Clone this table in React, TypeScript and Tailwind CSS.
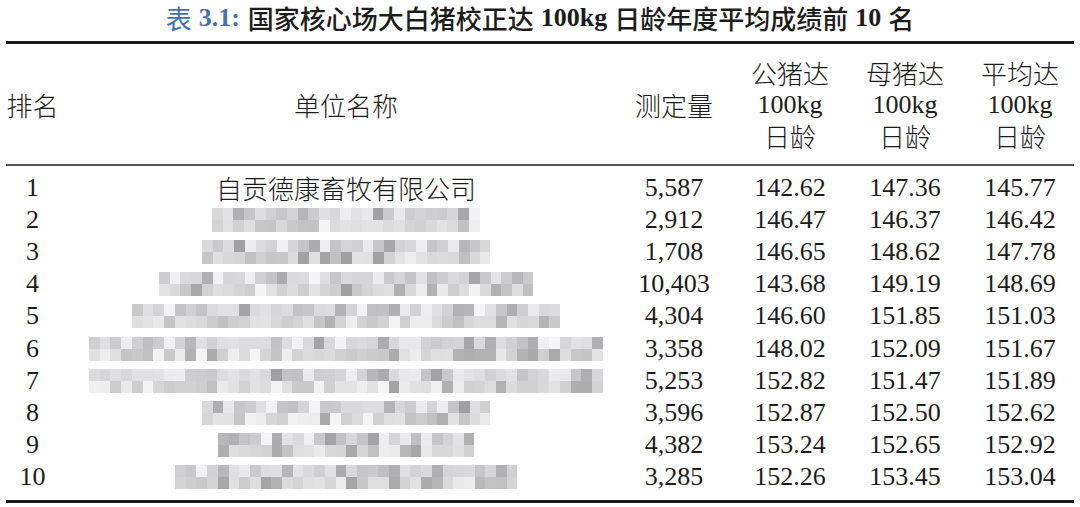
import * as React from 'react'

// Seeded RNG so the pixelated (redacted) names look the same every run.
function mulberry32(seed: number) {
  let a = seed
  return () => {
    a |= 0
    a = (a + 0x6d2b79f5) | 0
    let t = Math.imul(a ^ (a >>> 15), 1 | a)
    t = (t + Math.imul(t ^ (t >>> 7), 61 | t)) ^ t
    return ((t ^ (t >>> 14)) >>> 0) / 4294967296
  }
}

type Row = {
  rank: number
  name?: string
  blur?: number // width of the mosaic in px
  count: string
  boar: string
  sow: string
  avg: string
}

const ROWS: Row[] = [
  { rank: 1, name: '自贡德康畜牧有限公司', count: '5,587', boar: '142.62', sow: '147.36', avg: '145.77' },
  { rank: 2, blur: 270, count: '2,912', boar: '146.47', sow: '146.37', avg: '146.42' },
  { rank: 3, blur: 290, count: '1,708', boar: '146.65', sow: '148.62', avg: '147.78' },
  { rank: 4, blur: 372, count: '10,403', boar: '143.68', sow: '149.19', avg: '148.69' },
  { rank: 5, blur: 428, count: '4,304', boar: '146.60', sow: '151.85', avg: '151.03' },
  { rank: 6, blur: 510, count: '3,358', boar: '148.02', sow: '152.09', avg: '151.67' },
  { rank: 7, blur: 510, count: '5,253', boar: '152.82', sow: '151.47', avg: '151.89' },
  { rank: 8, blur: 290, count: '3,596', boar: '152.87', sow: '152.50', avg: '152.62' },
  { rank: 9, blur: 262, count: '4,382', boar: '153.24', sow: '152.65', avg: '152.92' },
  { rank: 10, blur: 344, count: '3,285', boar: '152.26', sow: '153.45', avg: '153.04' },
]

const COLS = 'grid grid-cols-[65px_562px_94px_138px_92px_138px]'
const SERIF = "[font-family:'Liberation_Serif','Noto_Sans_CJK_SC',serif]"
const CJK = "[font-family:'Noto_Sans_CJK_SC',sans-serif]"

function Mosaic({ width, seed }: { width: number; seed: number }) {
  const rand = mulberry32(seed)
  const cell = 10.7
  const n = Math.round(width / cell)
  const rects: React.ReactNode[] = []
  const heights = [12, 12]
  let y = 0
  heights.forEach((h, r) => {
    for (let i = 0; i < n; i++) {
      const v = rand()
      let g: number
      if (v < 0.15) g = 160 + Math.floor(rand() * 25)
      else if (v < 0.45) g = 192 + Math.floor(rand() * 20)
      else if (v < 0.82) g = 212 + Math.floor(rand() * 16)
      else g = 232 + Math.floor(rand() * 14)
      rects.push(
        <rect
          key={`${r}-${i}`}
          x={i * cell}
          y={y}
          width={cell + 0.3}
          height={h}
          fill={`rgb(${g},${g},${g + 3})`}
        />,
      )
    }
    y += h
  })
  return (
    <svg width={n * cell} height={24} className="block" shapeRendering="crispEdges">
      {rects}
    </svg>
  )
}

export default function App() {
  return (
    <div className={`w-[1080px] h-[507px] overflow-hidden bg-white text-[#1c1c1c] ${SERIF}`}>
      {/* caption */}
      <div className="flex h-[41px] items-start justify-center pt-[2px] text-[26px] leading-[32px]">
        <span className={`${CJK} text-[#4670b0]`}>表</span>
        <span className="ml-[7px] font-bold text-[#4670b0]">3.1:</span>
        <span className={`ml-[8px] ${CJK} font-medium`}>国家核心场大白猪校正达</span>
        <span className="mx-[7px] font-bold">100kg</span>
        <span className={`${CJK} font-medium`}>日龄年度平均成绩前</span>
        <span className="mx-[7px] font-bold">10</span>
        <span className={`${CJK} font-medium`}>名</span>
      </div>

      <div className="mx-[6px] h-[3px] bg-[#1a1a1a]" />

      {/* header */}
      <div className={`${COLS} h-[120px] items-center pt-[1px] text-[26px] leading-[31.5px]`}>
        <div className={`text-center ${CJK} font-light`}>排名</div>
        <div className={`text-center ${CJK} font-light`}>单位名称</div>
        <div className={`text-center ${CJK} font-light`}>测定量</div>
        {['公猪达', '母猪达', '平均达'].map((h) => (
          <div key={h} className="flex flex-col items-center">
            <span className={`${CJK} font-light`}>{h}</span>
            <span>100kg</span>
            <span className={`${CJK} font-light`}>日龄</span>
          </div>
        ))}
      </div>

      <div className="mx-[6px] h-[1.5px] bg-[#555]" />

      {/* body */}
      <div className="pt-[6px] pb-[7px]">
        {ROWS.map((r) => (
          <div key={r.rank} className={`${COLS} h-[32.2px] items-center text-[26px] leading-[32px]`}>
            <div className="text-center">{r.rank}</div>
            <div className="flex justify-center">
              {r.name ? (
                <span className={`${CJK} font-light`}>{r.name}</span>
              ) : (
                <Mosaic width={r.blur ?? 300} seed={r.rank * 97} />
              )}
            </div>
            <div className="text-center">{r.count}</div>
            <div className="text-center">{r.boar}</div>
            <div className="text-center">{r.sow}</div>
            <div className="text-center">{r.avg}</div>
          </div>
        ))}
      </div>

      <div className="mx-[6px] h-[3px] bg-[#1a1a1a]" />
    </div>
  )
}
